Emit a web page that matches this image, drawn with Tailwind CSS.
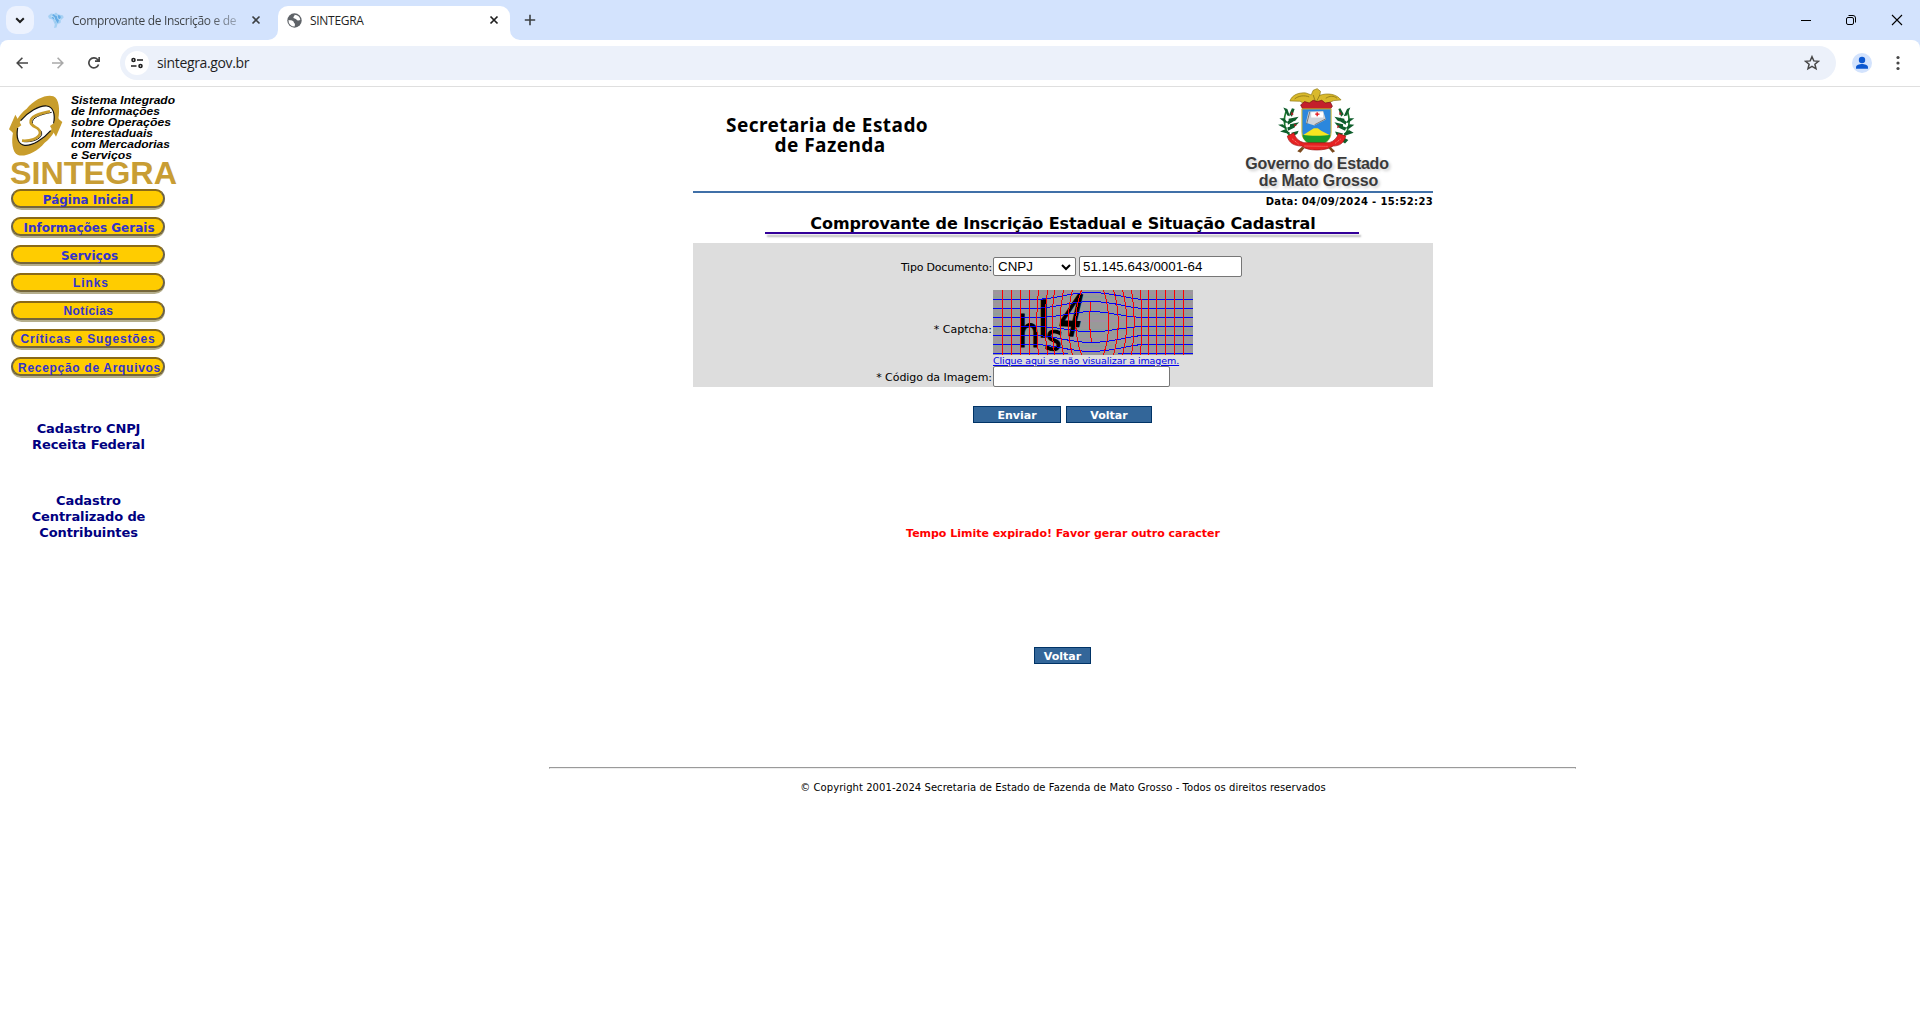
<!DOCTYPE html>
<html lang="pt-BR">
<head>
<meta charset="utf-8">
<title>SINTEGRA</title>
<script src="https://cdn.jsdelivr.net/npm/@tailwindcss/browser@4"></script>
</head>
<body class="bg-white text-black w-[1920px] h-[1032px] overflow-hidden font-['DejaVu_Sans',Verdana,sans-serif]">
<!-- tab strip -->
<header class="bg-[#d3e3fd]">
  <div class="flex h-10 items-center">
    <div class="ml-1.5 flex size-7 items-center justify-center rounded-[10px] bg-[#ecf2fe]">
      <svg class="size-3" viewBox="0 0 12 12" fill="none" stroke="#1f1f1f" stroke-width="2"><path d="M2.2 4.2 6 8l3.800-3.800"/></svg>
    </div>
    <div class="ml-3.5 flex w-[230px] items-center">
      <svg class="size-4 shrink-0" viewBox="0 0 16 16"><path d="M0 4 3 1.500 6 2 8 .5l2 1.700 5 1.300.7 2L13 8l-.5 3-3 1-1 3.500L6 16l.8-3.500L5.500 9.500 4.500 7.500 1 6.500z" fill="#a5d0f3"/><path d="m5 2 3 2 3-1 2 2-2 3-1 3-2 0-1-3-3-2z" fill="#64ace6"/><path d="m3 4 3 1 1 3 2 3m0-8 1 4 3 1" stroke="#d3e9fb" stroke-width=".7" fill="none"/></svg>
      <div class="ml-2 w-[168px] overflow-hidden whitespace-nowrap bg-gradient-to-r from-[#3c4043] from-80% to-[#3c4043]/30 bg-clip-text pt-px text-transparent font-['Open_Sans',sans-serif] text-[12px] leading-5 tracking-[-0.32px]">Comprovante de Inscrição e de</div>
      <svg class="ml-[11px] size-2.5" viewBox="0 0 10 10" stroke="#3c4043" stroke-width="1.600"><path d="m1.500 1.500 7 7m0-7-7 7"/></svg>
    </div>
    <div class="relative mt-1.5 flex h-[34px] w-[232px] items-center rounded-t-[10px] bg-white pb-1.5 pl-[9px]">
      <svg class="absolute -left-2.5 bottom-0 size-2.5" viewBox="0 0 10 10"><path d="M10 0v10H0A10 10 0 0 0 10 0" fill="#fff"/></svg>
      <svg class="absolute -right-2.5 bottom-0 size-2.5" viewBox="0 0 10 10"><path d="M0 0v10h10A10 10 0 0 1 0 0" fill="#fff"/></svg>
      <svg class="size-[15px]" viewBox="0 0 15 15"><circle cx="7.500" cy="7.500" r="7.200" fill="#5f6368"/><path d="M1.500 7c1.500.2 4 .2 5 1.500.6 1 .2 1.800 1.500 2.200l-.3 2.800A6 6 0 0 1 1.500 7M7.500 1.800C8 3 6.500 3.200 6.300 4.500 6.500 6 9 5.300 9.500 6.500c.6 1.300 2.500 1 3.800.6A6 6 0 0 0 7.500 1.800" fill="#fff"/></svg>
      <span class="ml-2 w-[179px] pt-px font-['Open_Sans',sans-serif] text-[12px] leading-5 tracking-[-0.3px] text-[#1f1f1f]">SINTEGRA</span>
      <svg class="size-2.5 shrink-0" viewBox="0 0 10 10" stroke="#1f1f1f" stroke-width="1.700"><path d="m1.500 1.500 7 7m0-7-7 7"/></svg>
    </div>
    <svg class="ml-[14px] size-3" viewBox="0 0 12 12" stroke="#3c4043" stroke-width="1.600"><path d="M6 .8v10.400M.8 6h10.400"/></svg>
    <div class="ml-auto flex items-center gap-[35px] pr-[17px]">
      <svg class="size-2.5" viewBox="0 0 10 10" stroke="#000" shape-rendering="crispEdges"><path d="M0 5.500h10"/></svg>
      <svg class="size-2.5" viewBox="0 0 10 10" fill="none" stroke="#000"><rect x=".5" y="2.500" width="7" height="7" rx="1.500"/><path d="M2.500.5H7A2.500 2.500 0 0 1 9.500 3v4.500"/></svg>
      <svg class="size-3" viewBox="0 0 12 12" stroke="#000" stroke-width="1.100"><path d="m1 1 10 10M11 1 1 11"/></svg>
    </div>
  </div>
  <div class="flex h-[46px] items-center rounded-t-lg bg-white">
    <svg class="ml-4 size-3" viewBox="0 0 12 12" fill="none" stroke="#474747" stroke-width="1.600"><path d="M12 6H1.200M6.400.8 1.200 6l5.200 5.200"/></svg>
    <svg class="ml-6 size-3" viewBox="0 0 12 12" fill="none" stroke="#a9a9a9" stroke-width="1.600"><path d="M0 6h10.800M5.600.8 10.800 6l-5.200 5.200"/></svg>
    <svg class="ml-6 size-3" viewBox="0 0 12 12" fill="none" stroke="#474747" stroke-width="1.700"><path d="M10.600 7.500A5 5 0 1 1 9.600 2.500L11 4M11.200 0v4.200H7"/></svg>
    <div class="ml-5 flex h-[34px] w-[1716px] items-center rounded-full bg-[#ecf1fa] pl-[5px]">
      <div class="flex size-6 items-center justify-center rounded-full bg-white">
        <svg class="size-3.5" viewBox="0 0 14 14" fill="none" stroke="#1f1f1f" stroke-width="1.600"><circle cx="3.500" cy="4" r="1.500"/><path d="M7 4h6M1 10h5.500"/><circle cx="10.500" cy="10" r="1.500"/></svg>
      </div>
      <span class="ml-2 font-['Open_Sans',sans-serif] text-[14px] leading-5 tracking-[-0.35px] text-[#1f1f1f]">sintegra.gov.br</span>
      <svg class="ml-auto mr-4 size-4" viewBox="0 0 16 16" fill="none" stroke="#474747" stroke-width="1.500"><path d="m8 1.700 1.800 4.200 4.600.4-3.500 3 1.100 4.500L8 11.400l-4 2.400 1.100-4.500-3.500-3 4.600-.4z"/></svg>
    </div>
    <svg class="ml-4 size-5" viewBox="0 0 20 20"><circle cx="10" cy="10" r="10" fill="#d3e3fd"/><circle cx="10" cy="7" r="3.200" fill="#0b57d0"/><path d="M4 15.800v-1.500c0-2.300 3.500-3.300 6-3.300s6 1 6 3.300v1.500z" fill="#0b57d0"/></svg>
    <svg class="ml-6 h-4 w-1" viewBox="0 0 4 16" fill="#474747"><circle cx="2" cy="2.500" r="1.600"/><circle cx="2" cy="8" r="1.600"/><circle cx="2" cy="13.500" r="1.600"/></svg>
  </div>
  <div class="h-px bg-[#dfdfdf]"></div>
</header>
<div class="flex">
  <!-- side menu -->
  <aside class="w-[206px] shrink-0 pt-[3px] pl-[7px]">
    <svg class="block h-[99px] w-[180px]" viewBox="7 90 180 99" font-family="Liberation Sans, Arial, sans-serif" font-weight="bold">
      <g transform="translate(0 86) scale(.3333)">
        <g id="swirl">
          <path d="M80 68C104 38 142 24 160 31C178 38 180 74 175 98L187 108L168 152L150 120L161 112C166 84 160 62 140 60C118 58 84 78 62 104C52 118 48 134 46 150L38 140C42 112 56 86 80 68z" fill="#c89d2c"/>
          <path d="M161 112C166 84 160 62 140 60C118 58 84 78 62 104" fill="none" stroke="#111" stroke-width="3.500"/>
        </g>
        <use href="#swirl" transform="rotate(180 107 119)"/>
        <path d="M150 76C118 82 88 92 92 110C96 126 122 122 120 142C116 158 90 166 66 164" fill="none" stroke="#111" stroke-width="3" transform="translate(5 3)"/>
        <path d="M150 76C118 82 88 92 92 110C96 126 122 122 120 142C116 158 90 166 66 164" fill="none" stroke="#c89d2c" stroke-width="8"/>
      </g>
      <g font-size="10.500" font-style="italic">
        <text x="71" y="103.500" textLength="104" lengthAdjust="spacingAndGlyphs">Sistema Integrado</text>
        <text x="71" y="114.500" textLength="89" lengthAdjust="spacingAndGlyphs">de Informações</text>
        <text x="71" y="125.500" textLength="100" lengthAdjust="spacingAndGlyphs">sobre Operações</text>
        <text x="71" y="136.500" textLength="82" lengthAdjust="spacingAndGlyphs">Interestaduais</text>
        <text x="71" y="147.500" textLength="99" lengthAdjust="spacingAndGlyphs">com Mercadorias</text>
        <text x="71" y="158.500" textLength="61" lengthAdjust="spacingAndGlyphs">e Serviços</text>
      </g>
      <text x="10" y="184" font-size="31" textLength="167" lengthAdjust="spacingAndGlyphs" fill="#c89d34">SINTEGRA</text>
    </svg>
    <nav class="ml-1 flex w-[154px] flex-col gap-2 text-[12px] font-bold leading-[14px] text-[#3333cc]">
      <a class="h-[21px] -mb-px rounded-full bg-[#b5ae8c]"><span class="flex h-[19px] items-center justify-center rounded-full border-2 border-t-[#8a6a18] border-x-[#6b6248] border-b-[#75663a] bg-[#ffcc00] pt-0.5 whitespace-nowrap">Página Inicial</span></a>
      <a class="h-[21px] -mb-px rounded-full bg-[#b5ae8c]"><span class="flex h-[19px] items-center justify-center rounded-full border-2 border-t-[#8a6a18] border-x-[#6b6248] border-b-[#75663a] bg-[#ffcc00] pt-0.5 pl-0.5 whitespace-nowrap">Informações Gerais</span></a>
      <a class="h-[21px] -mb-px rounded-full bg-[#b5ae8c]"><span class="flex h-[19px] items-center justify-center rounded-full border-2 border-t-[#8a6a18] border-x-[#6b6248] border-b-[#75663a] bg-[#ffcc00] pt-0.5 pl-[3px] whitespace-nowrap">Serviços</span></a>
      <a class="h-[21px] -mb-px rounded-full bg-[#b5ae8c]"><span class="flex h-[19px] items-center justify-center rounded-full border-2 border-t-[#8a6a18] border-x-[#6b6248] border-b-[#75663a] bg-[#ffcc00] pt-px pl-1.5 whitespace-nowrap font-['Liberation_Sans',Arial,sans-serif] tracking-[0.9px]">Links</span></a>
      <a class="h-[21px] -mb-px rounded-full bg-[#b5ae8c]"><span class="flex h-[19px] items-center justify-center rounded-full border-2 border-t-[#8a6a18] border-x-[#6b6248] border-b-[#75663a] bg-[#ffcc00] pt-px pl-px whitespace-nowrap font-['Liberation_Sans',Arial,sans-serif] tracking-[0.4px]">Notícias</span></a>
      <a class="h-[21px] -mb-px rounded-full bg-[#b5ae8c]"><span class="flex h-[19px] items-center justify-center rounded-full border-2 border-t-[#8a6a18] border-x-[#6b6248] border-b-[#75663a] bg-[#ffcc00] pt-px whitespace-nowrap font-['Liberation_Sans',Arial,sans-serif] tracking-[0.85px]">Críticas e Sugestões</span></a>
      <a class="h-[21px] -mb-px rounded-full bg-[#b5ae8c]"><span class="flex h-[19px] items-center justify-center rounded-full border-2 border-t-[#8a6a18] border-x-[#6b6248] border-b-[#75663a] bg-[#ffcc00] pt-[3px] pl-[3px] whitespace-nowrap font-['Liberation_Sans',Arial,sans-serif] tracking-[0.7px]">Recepção de Arquivos</span></a>
    </nav>
    <div class="mt-11 w-[163px] text-center text-[13px] font-bold leading-4 tracking-[-0.1px] text-[#000080]">
      <p>Cadastro CNPJ<br>Receita Federal</p>
      <p class="mt-10">Cadastro<br>Centralizado de<br>Contribuintes</p>
    </div>
  </aside>
  <!-- content -->
  <main class="flex grow flex-col items-center">
    <div class="flex h-[104px] w-[740px] justify-between pl-[33px]">
      <div class="pt-7 text-center font-['Noto_Sans',sans-serif] text-[19px] font-bold leading-5 tracking-[0.45px]">Secretaria de Estado<br><span class="pl-1.5">de Fazenda</span></div>
      <div class="mr-11 flex w-[144px] flex-col items-center">
        <svg class="h-[68px] w-[83px] shrink-0" viewBox="228 10 250 205">
          <path d="M300 180C262 160 244 128 258 84M405 180C443 160 456 128 444 84" stroke="#1c7a2c" stroke-width="5" fill="none"/>
          <g fill="#0f5e2c">
            <path d="M262 96 250 72l12 4 8 22zM268 92l8-18 8 2-8 24zM256 118l-18-14 14 0 12 14zM262 114l20-12-2 12-16 10zM256 136l-22-12 14-2 14 12zM262 132l26-10-4 10-20 10zM268 152l-28-8 14-6 16 10zM274 148l22-6-4 10-14 6zM266 106l30-6-10 12-20 6zM270 122l28-6-10 10-18 6z"/>
            <path d="M442 96l10-24-10 4-10 22zM432 92l-10-18-6 2 8 24zM446 118l18-14-14 0-12 14zM440 114l-18-12 0 12 16 10zM448 136l16-12-14-2-12 12zM440 132l-28-10 4 10 20 10zM438 156l24-8-14-8-16 10zM430 150l-24-6 4 10 14 6zM436 180l10-10-14-8-12 8zM434 106l-30-6 10 12 20 6zM430 122l-26-6 8 10 18 6z"/>
          </g>
          <g fill="#b11a22"><path d="m275 84 6 8-8 4zM284 120l6 6-8 4zM420 84l6 8-8 2zM414 124l6 6-8 4z"/></g>
          <path d="M270 52c6-18 26-26 48-24l16 6 6-14 12-5 10 8-2 12c24-8 50-4 64 14l-22 2-24 10-30 6-30-4-18-10z" fill="#d9b92c" stroke="#8c7615" stroke-width="2"/>
          <path d="M284 46c12-10 30-12 44-6M378 44c12-8 24-8 34 0M340 34l8 24 12-24" stroke="#8c7615" stroke-width="2.500" fill="none"/>
          <path d="m302 64 12-10 14 4 12-8 12 4 14-4 10 8 16-2 6 12-6 8h-84z" fill="#c4202b" stroke="#6e1116" stroke-width="2"/>
          <path d="M306 76h88v70c0 28-24 38-44 44-20-6-44-16-44-44z" fill="#2b87dd" stroke="#d8ba2d" stroke-width="3"/>
          <path d="M308 156 330 142l12-8 12 0 10 8 28 14-42 4z" fill="#f7e520"/>
          <path d="M308 154c20 4 64 4 84 0-2 20-22 28-42 34-20-6-42-14-42-34z" fill="#199a2c"/>
          <path d="m326 84 44-2 8 26-34 18-26-8z" fill="#cfd4da"/><path d="M334 86h36v16h-36z" fill="#fff"/><path d="M320 122 330 84M344 124l34-18" stroke="#777" stroke-width="3"/>
          <path d="M352 86v12M346 92h13" stroke="#e3121b" stroke-width="4"/>
          <path d="m262 158 20-10c4 16 14 26 30 30l76 0c14-4 24-14 28-28l22 8c-4 20-18 30-38 30-20 16-80 16-94 0-24 0-40-10-44-30z" fill="#e62222" stroke="#961212" stroke-width="2"/>
          <path d="M276 166l20 16m18 6 70 1m22-9 18-14" stroke="#f9a098" stroke-width="2.500" stroke-dasharray="3 3"/>
          <path d="m292 204 14-14 8 4-12 14zM392 190l14 14-8 4-12-14z" fill="#7c4a1e"/>
        </svg>
        <div class="text-center font-['Liberation_Sans',sans-serif] text-[16px] font-bold leading-[17px] tracking-[-0.25px] text-[#3a3a3a] whitespace-nowrap [text-shadow:2px_2px_3px_#ccc]">Governo do Estado<br><span class="pl-[3px] tracking-[-0.1px]">de Mato Grosso</span></div>
      </div>
    </div>
    <div class="h-0.5 w-[740px] bg-[#4070a8]"></div>
    <div class="h-[22px] w-[740px] pt-px text-right text-[10px] font-bold leading-4 tracking-[0.35px]">Data: 04/09/2024 - 15:52:23</div>
    <h1 class="flex h-[17px] w-[594px] items-center justify-center whitespace-nowrap text-[16px] font-bold tracking-[-0.1px]"><span class="m">Comprovante de Inscrição Estadual e Situação Cadastral</span></h1>
    <div class="mr-0.5 h-0.5 w-[594px] bg-[#330099] shadow-[2px_3px_2px_#bbb]"></div>
    <form class="mt-[9px] h-[144px] w-[740px] bg-[#dddddd] pt-[13px] text-[11px]">
      <div class="flex h-[21px] items-center">
        <span class="w-[300px] pt-[3px] pr-px text-right tracking-[-0.2px]">Tipo Documento:</span>
        <div class="flex h-[19px] w-[83px] items-center justify-between rounded-[2px] border border-[#767676] bg-white pr-1 pl-1 font-['Liberation_Sans',Arial] text-[13.333px]">CNPJ<svg class="h-2 w-2.5" viewBox="0 0 10 8" fill="none" stroke="#000" stroke-width="2"><path d="m1 2 4 4 4-4"/></svg></div>
        <div class="ml-[3px] flex h-[21px] w-[163px] items-center rounded-[2px] border border-[#767676] bg-white pl-[3px] font-['Liberation_Sans',Arial] text-[13.333px]">51.145.643/0001-64</div>
      </div>
      <div class="mt-[13px] flex h-[76px]">
        <span class="w-[300px] pr-px pt-8 text-right leading-4">* Captcha:</span>
        <div>
          <svg class="block h-[65px] w-[200px]" viewBox="0 0 200 65">
            <rect width="200" height="65" fill="#999"/>
            <path d="M0 3h200M0 14h200M0 31h200M0 49h200M0 60h200" stroke="#a092a0" stroke-width="2"/><path d="M0 7h200M0 24h200M0 40h200M0 56h200" stroke="#8f9c98" stroke-width="2"/>
            <g font-family="DejaVu Sans, sans-serif" fill="#000" stroke="#000">
              <text transform="translate(25 57) scale(.82 1)" font-size="42" stroke-width="1">h</text>
              <text transform="translate(44 47) scale(1 1)" font-size="48" stroke-width="1.500">l</text>
              <text transform="translate(51 59) rotate(8) scale(.9 1)" font-size="36" stroke-width="1">s</text>
              <text transform="translate(63 45) rotate(3) skewX(-10) scale(.85 1.350)" font-size="42" stroke-width="1.200">4</text>
            </g>
            <g fill="none" stroke="#00f" shape-rendering="crispEdges"><path d="M0 9.500h42C65 9 75 2.500 98 2.500S135 9 150 9.500h50M0 18.500h40C65 18 75 11.500 98 11.500S135 18 150 18.500h50M0 27.500h45C70 27 80 21.500 98 21.500S130 27 150 27.500h50M0 36.500h45C70 37 80 42 98 42S130 37 150 36.500h50M0 45.500h42C65 46 75 52.500 98 52.500S135 46 150 45.500h50M0 54.500h42C65 55 75 61.500 98 61.500S135 55 150 54.500h50M0 63.500h75M125 63.500h75"/></g>
            <g fill="none" stroke="red" shape-rendering="crispEdges"><path d="M9.500 0v65M18.500 0v65M27.500 0v65M36.500 0v65M45.500 0Q42 32 45.500 65M54.500 0Q50 32 54.500 65M61.500 0Q57 32 61.500 65M70.500 0Q64 32 70.500 65M79.500 0Q71 32 79.500 65M88.500 0Q77 32 88.500 65M98 12Q95 32 98.500 52M110.500 0Q121 32 110.500 65M120.500 0Q130 32 120.500 65M129.500 0Q138 32 129.500 65M138.500 0Q144 32 138.500 65M147.500 0Q150 32 147.500 65M155.500 0v65M163.500 0v65M172.500 0v65M181.500 0v65M190.500 0v65"/></g>
          </svg>
          <a class="block h-[11px] whitespace-nowrap text-[9.500px] leading-[11px] tracking-[-0.09px] text-[#0000ee] underline">Clique aqui se não visualizar a imagem.</a>
        </div>
      </div>
      <div class="flex h-[21px] items-center">
        <span class="w-[300px] pt-[3px] pr-px text-right tracking-[-0.05px]">* Código da Imagem:</span>
        <div class="h-[21px] w-[177px] rounded-[2px] border border-[#767676] bg-white"></div>
      </div>
    </form>
    <div class="mt-[19px] mr-px flex gap-[5px] text-[11px] font-bold text-white">
      <div class="flex h-[17px] w-[88px] items-center justify-center border border-[#003366] bg-[#336699] pt-[3px]">Enviar</div>
      <div class="flex h-[17px] w-[86px] items-center justify-center border border-[#003366] bg-[#336699] pt-[3px]">Voltar</div>
    </div>
    <p class="mt-[103px] text-[11px] font-bold leading-4 tracking-[-0.02px] text-[#ff0000]">Tempo Limite expirado! Favor gerar outro caracter</p>
    <div class="mt-[105px] mr-px flex h-[17px] w-[57px] items-center justify-center border border-[#003366] bg-[#336699] pt-[3px] text-[11px] font-bold text-white">Voltar</div>
    <hr class="mt-[103px] mr-px h-0.5 w-[1027px] border border-[#9a9a9a] border-b-[#eeeeee]">
    <p class="mt-[11px] text-[10px] leading-4 tracking-[0.06px]">© Copyright 2001-2024 Secretaria de Estado de Fazenda de Mato Grosso - Todos os direitos reservados</p>
  </main>
</div>
</body>
</html>
